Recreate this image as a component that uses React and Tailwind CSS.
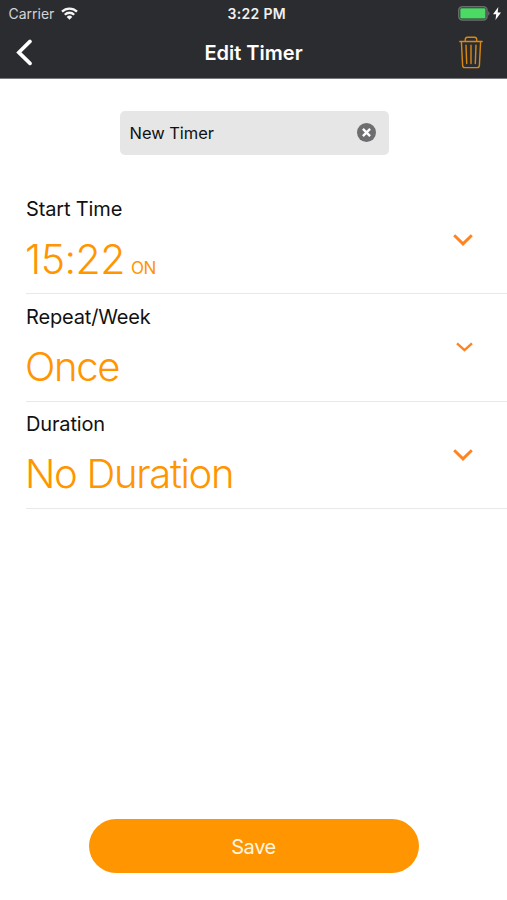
import React, { useState } from "react";

const StatusBar = () => (
    <div className="flex items-center h-[28px] pl-[8.5px] pr-[6px] text-[14px] leading-none">
        <div className="flex items-center flex-1">
            <span className="text-[#d4d4d6]">Carrier</span>
            <svg className="ml-[6.5px] mb-[1px]" width="17" height="13" viewBox="0 0 17 13" fill="none" stroke="#f5f5f5" strokeWidth="2.3">
                <path d="M1 4.6a10.8 10.8 0 0 1 15 0" />
                <path d="M3.8 7.7a6.7 6.7 0 0 1 9.4 0" />
                <path d="M8.5 12.8L5.7 9.9a4 4 0 0 1 5.6 0z" fill="#f5f5f5" stroke="none" />
            </svg>
        </div>
        <span className="ml-[4px] text-[#f0f0f0] font-semibold tracking-[0.3px]">3:22 PM</span>
        <div className="flex items-center justify-end flex-1 pb-[1px]">
            <svg width="32" height="15" viewBox="0 0 32 15">
                <rect x="0.8" y="0.8" width="28.2" height="13.2" rx="3.5" fill="none" stroke="#6b6c6e" strokeWidth="1.5" />
                <rect x="2.3" y="2.3" width="25.2" height="10.2" rx="1.2" fill="#4cd964" />
                <path d="M30.2 5c1.8.8 1.8 4 0 4.8z" fill="#6b6c6e" />
            </svg>
            <svg className="ml-[3px]" width="8" height="13" viewBox="0 0 8 13">
                <path d="M5.3 0L0 7.2h3.2L2.5 13 8 5.4H4.7z" fill="#fff" />
            </svg>
        </div>
    </div>
);

const TrashIcon = () => (
    <svg width="24" height="33" viewBox="0 0 24 33" fill="none" stroke="#d98912" strokeWidth="1.4" strokeLinecap="round" strokeLinejoin="round">
        <path d="M0.8 5.5h22.4" />
        <path d="M6.3 5.2V3.4c0-1.4.8-2.2 2.2-2.2h7c1.4 0 2.2.8 2.2 2.2v1.8" />
        <path d="M2.4 5.8l1.2 23.6c.1 1.4.9 2.2 2.3 2.2h12.2c1.4 0 2.2-.8 2.3-2.2l1.2-23.6" />
        <path d="M7 9.3l.7 18.2M12 9.3v18.2M17 9.3l-.7 18.2" />
    </svg>
);

const Header = () => (
    <header className="h-[79px] bg-[#2b2c30] border-b border-[#77787b]">
        <StatusBar />
        <div className="flex items-center h-[49px] pl-[16px] pr-[24px]">
            <button className="flex flex-1">
                <svg width="17" height="27" viewBox="0 0 17 27" fill="none" stroke="#fff" strokeWidth="3.6" strokeLinecap="round">
                    <path d="M14 2.4L2.8 13.4 14 24.4" />
                </svg>
            </button>
            <h1 className="ml-[8px] text-[20px] leading-none font-semibold text-white">Edit Timer</h1>
            <button className="flex flex-1 justify-end">
                <TrashIcon />
            </button>
        </div>
    </header>
);

const TimerRow = ({ label, value, suffix, small }) => (
    <div className="flex items-center h-[107.5px] border-b border-[#e9e9ea] pr-[34px]">
        <div className="flex-1 mb-[1px]">
            <p className="text-[20px] leading-[24px] tracking-[-0.15px] text-[#111]">{label}</p>
            <div className="flex items-baseline h-[44px] mt-[16px] -ml-[1px] leading-[44px] font-light text-[#ff9500]">
                <span className={suffix ? "text-[41px] tracking-[-0.5px]" : "text-[40px] tracking-[-1.3px]"}>{value}</span>
                {suffix && <span className="ml-[6px] text-[17px] leading-none font-normal tracking-[-0.4px]">{suffix}</span>}
            </div>
        </div>
        {small ? (
            <svg width="17" height="10" viewBox="0 0 17 10" fill="none" stroke="#ff8421" strokeWidth="2.4">
                <path d="M1 1.3l7.5 6.9L16 1.3" />
            </svg>
        ) : (
            <svg width="20" height="12" viewBox="0 0 20 12" fill="none" stroke="#ff8421" strokeWidth="2.9">
                <path d="M1.2 1.3L10 9.9l8.8-8.6" />
            </svg>
        )}
    </div>
);

const App = () => {
    const [name, setName] = useState("New Timer");

    return (
        <div className="flex flex-col w-[507px] h-[900px] bg-white font-['Inter',sans-serif]">
            <Header />

            {/* Timer name */}
            <div className="flex items-center w-[269px] h-[44px] mt-[32px] ml-[119.5px] pl-[10px] pr-[13px] rounded-[5px] bg-[#e6e6e6]">
                <input
                    className="flex-1 min-w-0 text-[16.5px] tracking-[-0.05px] text-[#111] bg-transparent outline-none"
                    value={name}
                    onChange={(e) => setName(e.target.value)}
                />
                <button className="mb-[1px]" onClick={() => setName("")}>
                    <svg width="19" height="19" viewBox="0 0 19 19">
                        <circle cx="9.5" cy="9.5" r="9.5" fill="#6e6e70" />
                        <path d="M5.9 5.9l7.2 7.2M13.1 5.9l-7.2 7.2" stroke="#fff" strokeWidth="2.3" />
                    </svg>
                </button>
            </div>

            <div className="mt-[31.5px] ml-[26px]">
                <TimerRow label="Start Time" value="15:22" suffix="ON" />
                <TimerRow label="Repeat/Week" value="Once" small />
                <TimerRow label="Duration" value="No Duration" />
            </div>

            <button className="mt-auto mb-[27px] mx-auto w-[330px] h-[54px] pt-[1px] rounded-full bg-[#ff9500] text-[20px] tracking-[-0.4px] text-[#fff6e0]">
                Save
            </button>
        </div>
    );
};

export default App;
